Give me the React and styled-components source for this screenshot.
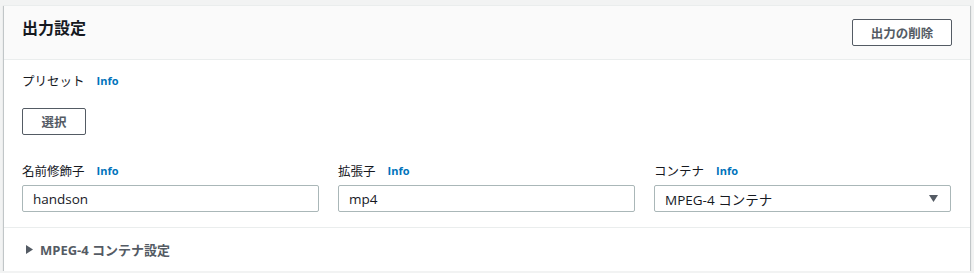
import React from 'react'
import styled, { createGlobalStyle } from 'styled-components'

const GlobalStyle = createGlobalStyle`
  body {
    margin: 0;
    background: #f2f3f3;
    font-family: "Open Sans", "Noto Sans CJK JP", sans-serif;
    color: #16191f;
  }
`

const fields = [
  { label: '名前修飾子', value: 'handson' },
  { label: '拡張子', value: 'mp4' },
  { label: 'コンテナ', value: 'MPEG-4 コンテナ', select: true },
]

const App = () => {
  return (
    <>
      <GlobalStyle />
      <Card>
        <Header>
          <Title>出力設定</Title>
          <Button>出力の削除</Button>
        </Header>

        <Body>
          <Label>
            プリセット <Info>Info</Info>
          </Label>
          <Button small>選択</Button>

          <FieldRow>
            {fields.map((f) => (
              <Field key={f.label}>
                <Label>
                  {f.label} <Info>Info</Info>
                </Label>
                <InputBox>
                  <span>{f.value}</span>
                  {f.select && (
                    <svg width="9" height="7" viewBox="0 0 9 7">
                      <path d="M0 0 H9 L4.5 7 Z" fill="#545b64" />
                    </svg>
                  )}
                </InputBox>
              </Field>
            ))}
          </FieldRow>
        </Body>

        <Expander>
          <svg width="7" height="9" viewBox="0 0 7 9">
            <path d="M0 0 L7 4.5 L0 9 Z" fill="#545b64" />
          </svg>
          MPEG-4 コンテナ設定
        </Expander>
      </Card>
    </>
  )
}

export default App

const Card = styled.div`
  margin: 5px 4px 0 4px;
  width: 966px;
  height: 266px;
  box-sizing: border-box;
  background: #fff;
  border-top: 1px solid #eaeded;
  box-shadow: 0 1px 1px 0 rgba(0, 28, 36, 0.35), 1px 1px 1px 0 rgba(0, 28, 36, 0.15),
    -1px 1px 1px 0 rgba(0, 28, 36, 0.15);
  display: flex;
  flex-direction: column;
`

const Header = styled.div`
  height: 54px;
  background: #fafafa;
  border-bottom: 1px solid #eaeded;
  display: flex;
  align-items: flex-start;
  justify-content: space-between;
  padding: 11px 18px 0 18px;
  box-sizing: border-box;
`

const Title = styled.h2`
  margin: 0;
  font-size: 16px;
  line-height: 20px;
  font-weight: bold;
  color: #16191f;
  font-family: "Noto Sans CJK JP", sans-serif;
`

const Button = styled.button`
  margin-top: ${(p) => (p.small ? '17px' : '2px')};
  align-self: flex-start;
  width: ${(p) => (p.small ? '64px' : '100px')};
  height: 27px;
  background: #fff;
  border: 1px solid #545b64;
  border-radius: 2px;
  font-family: "Noto Sans CJK JP", sans-serif;
  font-size: 12.5px;
  font-weight: bold;
  color: #545b64;
  padding: 0;
`

const Body = styled.div`
  padding: 11px 18px 15px 18px;
  border-bottom: 1px solid #eaeded;
  display: flex;
  flex-direction: column;
`

const Label = styled.div`
  font-family: "Noto Sans CJK JP", sans-serif;
  font-size: 12.5px;
  line-height: 20px;
  color: #16191f;
  display: flex;
  align-items: center;
  gap: 12px;
`

const Info = styled.span`
  font-family: "Open Sans", sans-serif;
  font-size: 11px;
  font-weight: bold;
  color: #0073bb;
`

const FieldRow = styled.div`
  margin-top: 26px;
  display: grid;
  grid-template-columns: repeat(3, 297px);
  column-gap: 19px;
`

const Field = styled.div`
  display: flex;
  flex-direction: column;
  gap: 4px;
`

const InputBox = styled.div`
  height: 27px;
  box-sizing: border-box;
  border: 1px solid #aab7b8;
  border-radius: 2px;
  padding: 0 12px 0 10px;
  display: flex;
  align-items: center;
  justify-content: space-between;
  font-family: "Open Sans", "Noto Sans CJK JP", sans-serif;
  font-size: 13.5px;
  color: #16191f;
`

const Expander = styled.div`
  flex: 1;
  display: flex;
  align-items: center;
  gap: 7px;
  padding-left: 22px;
  font-family: "Open Sans", "Noto Sans CJK JP", sans-serif;
  font-size: 13px;
  font-weight: bold;
  color: #545b64;
`
